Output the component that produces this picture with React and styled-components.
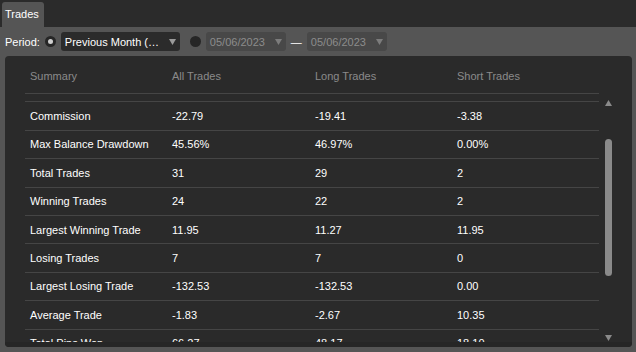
import React from "react";
import styled, { createGlobalStyle } from "styled-components";

const GlobalStyle = createGlobalStyle`
  html, body { margin: 0; padding: 0; background: #555555; }
  body { font-family: "Liberation Sans", Arial, sans-serif; font-size: 11px; }
  * { box-sizing: border-box; }
`;

const Page = styled.div`
  width: 636px;
  height: 352px;
  background: #555555;
  display: flex;
  flex-direction: column;
  overflow: hidden;
`;

const TabBar = styled.div`
  height: 27px;
  background: #2b2b2b;
  display: flex;
  align-items: flex-end;
  padding-left: 2px;
`;

const Tab = styled.div`
  height: 25px;
  line-height: 25px;
  padding: 0 5px 0 3px;
  background: #555555;
  color: #ffffff;
  font-size: 11px;
  border-radius: 3px 3px 0 0;
`;

const Toolbar = styled.div`
  display: flex;
  align-items: center;
  gap: 5px;
  padding: 5px 5px;
  height: 29px;
`;

const Label = styled.span`
  color: #ffffff;
  font-size: 11px;
`;

const Radio = styled.span`
  width: 11px;
  height: 11px;
  border-radius: 50%;
  background: #262626;
  display: inline-flex;
  align-items: center;
  justify-content: center;
  margin-left: ${(p) => (p.$gap ? "5px" : "0")};
  &::after {
    content: "";
    width: 5px;
    height: 5px;
    border-radius: 50%;
    background: ${(p) => (p.$checked ? "#cfcfcf" : "transparent")};
  }
`;

const Select = styled.div`
  height: 19px;
  width: ${(p) => p.$w}px;
  border-radius: 3px;
  background: ${(p) => (p.$disabled ? "#484848" : "#2b2b2b")};
  color: ${(p) => (p.$disabled ? "#8c8c8c" : "#ffffff")};
  display: flex;
  align-items: center;
  justify-content: space-between;
  padding: 0 4px 0 4px;
  font-size: 11px;
`;

const SelectText = styled.span`
  width: ${(p) => p.$w}px;
  white-space: nowrap;
  overflow: hidden;
  text-overflow: ellipsis;
`;

const Dash = styled.span`
  color: #ffffff;
  font-size: 11px;
`;

const Arrow = ({ color = "#9a9a9a", up }) => (
  <svg width="7" height="6" viewBox="0 0 7 6" style={{ display: "block" }}>
    <polygon points={up ? "3.5,0 7,6 0,6" : "0,0 7,0 3.5,6"} fill={color} />
  </svg>
);

const Panel = styled.div`
  margin: 0 4px 0 5px;
  height: 291px;
  background: #2a2a2a;
  border-radius: 4px;
  padding: 0 16px 0 20px;
  display: flex;
  flex-direction: column;
`;

const columns = "142px 143px 142px 1fr";

const HeaderRow = styled.div`
  display: grid;
  grid-template-columns: ${columns};
  align-items: center;
  height: 38px;
  padding-top: 3px;
  border-bottom: 1px solid #454545;
  margin-right: 17px;
`;

const HeaderCell = styled.div`
  padding-left: 5px;
  color: #8a8a8a;
  font-size: 11px;
`;

const Body = styled.div`
  display: flex;
  height: 248px;
`;

const Viewport = styled.div`
  width: 574px;
  height: 248px;
  overflow: hidden;
`;

const Rows = styled.div`
  margin-top: ${(p) => -p.$scroll}px;
`;

const Row = styled.div`
  display: grid;
  grid-template-columns: ${columns};
  align-items: center;
  height: 28.4px;
  border-bottom: 1px solid #454545;
`;

const Cell = styled.div`
  padding-left: 5px;
  color: #ffffff;
  font-size: 11px;
  white-space: nowrap;
`;

const ScrollBar = styled.div`
  width: 17px;
  display: flex;
  flex-direction: column;
  align-items: center;
  padding: 6px 0 1px 2px;
`;

const Track = styled.div`
  flex: 1;
  width: 7px;
  display: flex;
  flex-direction: column;
`;

const Thumb = styled.div`
  width: 7px;
  border-radius: 4px;
  background: #8a8a8a;
`;

const BottomStrip = styled.div`
  height: 5px;
  background: #262626;
  margin: 0 -16px 0 -20px;
  border-radius: 0 0 4px 4px;
`;

const rows = [
  ["", "", "", ""],
  ["Commission", "-22.79", "-19.41", "-3.38"],
  ["Max Balance Drawdown", "45.56%", "46.97%", "0.00%"],
  ["Total Trades", "31", "29", "2"],
  ["Winning Trades", "24", "22", "2"],
  ["Largest Winning Trade", "11.95", "11.27", "11.95"],
  ["Losing Trades", "7", "7", "0"],
  ["Largest Losing Trade", "-132.53", "-132.53", "0.00"],
  ["Average Trade", "-1.83", "-2.67", "10.35"],
  ["Total Pips Won", "66.27", "48.17", "18.10"],
];

export default function App() {
  return (
    <Page>
      <GlobalStyle />
      <TabBar>
        <Tab>Trades</Tab>
      </TabBar>
      <Toolbar>
        <Label>Period:</Label>
        <Radio $checked />
        <Select $w={119}>
          <SelectText $w={95}>Previous Month (05/2023)</SelectText>
          <Arrow />
        </Select>
        <Radio $gap />
        <Select $w={80} $disabled>
          <span>05/06/2023</span>
          <Arrow color="#7c7c7c" />
        </Select>
        <Dash>—</Dash>
        <Select $w={80} $disabled>
          <span>05/06/2023</span>
          <Arrow color="#7c7c7c" />
        </Select>
      </Toolbar>
      <Panel>
        <HeaderRow>
          <HeaderCell>Summary</HeaderCell>
          <HeaderCell>All Trades</HeaderCell>
          <HeaderCell>Long Trades</HeaderCell>
          <HeaderCell>Short Trades</HeaderCell>
        </HeaderRow>
        <Body>
          <Viewport>
            <Rows $scroll={20}>
              {rows.map((r, idx) => (
                <Row key={idx}>
                  {r.map((c, i) => (
                    <Cell key={i}>{c}</Cell>
                  ))}
                </Row>
              ))}
            </Rows>
          </Viewport>
          <ScrollBar>
            <Arrow color="#8a8a8a" up />
            <Track>
              <div style={{ height: 33 }} />
              <Thumb style={{ height: 137 }} />
            </Track>
            <Arrow color="#8a8a8a" />
          </ScrollBar>
        </Body>
        <BottomStrip />
      </Panel>
    </Page>
  );
}
